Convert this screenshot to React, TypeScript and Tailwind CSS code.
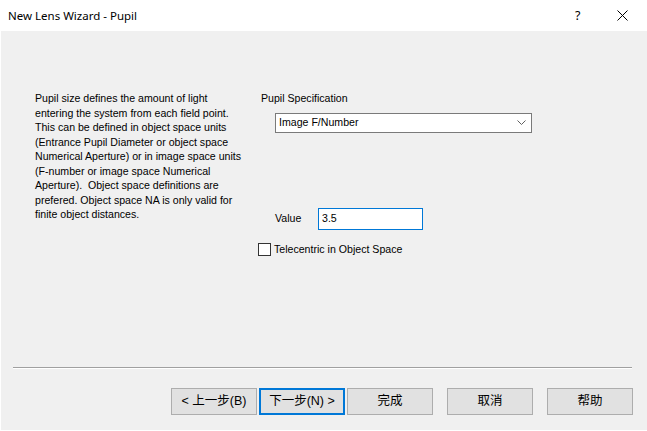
export default function App() {
  return (
    <div className="w-[647px] h-[431px] bg-white flex flex-col font-['Liberation_Sans',Arial,sans-serif] text-black overflow-hidden">
      <TitleBar />
      <div className="flex-1 bg-[#f0f0f0] ml-px mb-px flex flex-col">
        <div className="flex flex-1 text-[10.6px]">
          <p className="w-[260px] shrink-0 pl-[34px] pt-[60px] leading-[14.5px] whitespace-nowrap">
            Pupil size defines the amount of light<br />
            entering the system from each field point.<br />
            This can be defined in object space units<br />
            (Entrance Pupil Diameter or object space<br />
            Numerical Aperture) or in image space units<br />
            (F-number or image space Numerical<br />
            Aperture).&nbsp; Object space definitions are<br />
            prefered. Object space NA is only valid for<br />
            finite object distances.
          </p>
          <PupilSpec />
        </div>
        <div className="mx-[12px] w-[619px] border-t border-[#a0a0a0] border-b border-b-white" />
        <div className="flex pl-[170px] pt-[19px] pb-[15px] text-[12.5px]">
          <WizButton label="< 上一步(B)" />
          <WizButton label="下一步(N) >" active className="ml-[2px]" />
          <WizButton label="完成" className="ml-[2px]" />
          <WizButton label="取消" className="ml-[14px]" />
          <WizButton label="帮助" className="ml-[14px]" />
        </div>
      </div>
    </div>
  )
}

function TitleBar() {
  return (
    <div className="h-[31px] flex items-center relative font-['Noto_Sans',sans-serif] text-[11.5px]">
      <span className="pl-[8px]">New Lens Wizard - Pupil</span>
      <span className="absolute left-[575px] top-[7px] text-[12.5px]">?</span>
      <svg className="absolute left-[617px] top-[10px]" width="11" height="11" viewBox="0 0 11 11">
        <path d="M0.5 0.5 L10.5 10.5 M10.5 0.5 L0.5 10.5" stroke="#000" strokeWidth="1" />
      </svg>
    </div>
  )
}

function PupilSpec() {
  return (
    <div className="flex flex-col pt-[60px]">
      <span className="leading-[14.5px]">Pupil Specification</span>
      <div className="ml-[14px] mt-[7px] w-[257px] h-[20px] bg-white border border-[#7a7a7a] flex items-center justify-between pl-[3px] pr-[5px]">
        <span>Image F/Number</span>
        <svg width="9" height="5" viewBox="0 0 9 5">
          <path d="M0.5 0.5 L4.5 4.5 L8.5 0.5" stroke="#606060" strokeWidth="1" fill="none" />
        </svg>
      </div>
      <div className="flex items-center ml-[14px] mt-[75px]">
        <span className="w-[43px]">Value</span>
        <div className="w-[105px] h-[22px] bg-white border border-[#0078d7] flex items-center pl-[3px]">3.5</div>
      </div>
      <div className="flex items-center -ml-[3px] mt-[12px]">
        <div className="w-[13px] h-[13px] bg-white border border-[#333]" />
        <span className="ml-[3px]">Telecentric in Object Space</span>
      </div>
    </div>
  )
}

function WizButton({ label, active, className = "" }: { label: string; active?: boolean; className?: string }) {
  return (
    <div
      className={
        "w-[86px] h-[27px] bg-[#e1e1e1] flex items-center justify-center font-['Liberation_Sans','Noto_Sans_CJK_SC',sans-serif] " +
        (active ? "border-2 border-[#0078d7] " : "border border-[#adadad] ") +
        className
      }
    >
      {label}
    </div>
  )
}
